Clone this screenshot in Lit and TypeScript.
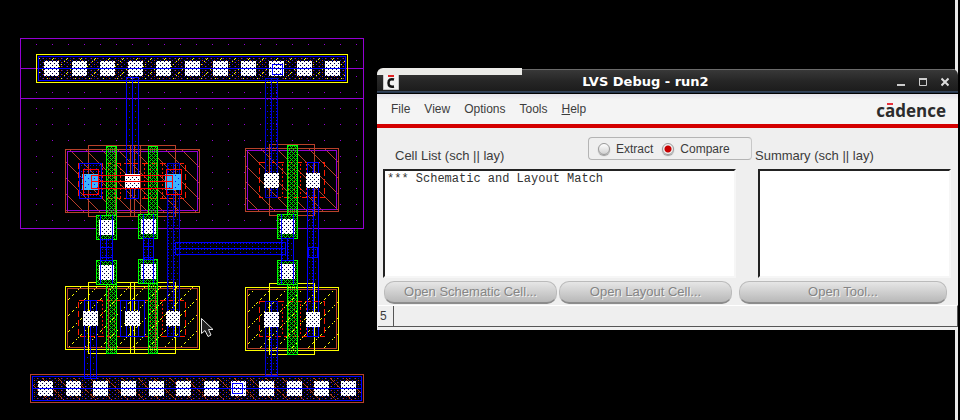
import { LitElement, html, svg, css } from "lit";
import { customElement } from "lit/decorators.js";

const BLUE = "#0000ff";
const DIM = "#0000d0";
const BROWN = "#b8402a";
const PURPLE = "#9400d3";
const YELLOW = "#ffff00";
const GREEN = "#00ff00";
const RED = "#ff1a00";

type Box = [x1: number, y1: number, x2: number, y2: number];

// One-pixel outline through the pixels of the given corners.
const outline = ([x1, y1, x2, y2]: Box, color: string, dash = "") => svg`
  <rect x=${x1 + 0.5} y=${y1 + 0.5} width=${x2 - x1} height=${y2 - y1}
    fill="none" stroke=${color} stroke-dasharray=${dash || "none"} />`;

const fill = ([x1, y1, x2, y2]: Box, paint: string) => svg`
  <rect x=${x1} y=${y1} width=${x2 - x1 + 1} height=${y2 - y1 + 1} fill=${paint} />`;

const hline = (x: number, y: number, w: number, color: string) => svg`
  <rect x=${x} y=${y} width=${w} height="1" fill=${color} />`;

const vline = (x: number, y: number, h: number, color: string) => svg`
  <rect x=${x} y=${y} width="1" height=${h} fill=${color} />`;

const contact = (x: number, y: number, w = 15, h = 15) => svg`
  <rect x=${x} y=${y} width=${w} height=${h} fill="#fff" />
  <rect x=${x} y=${y} width=${w} height=${h} fill="url(#pin)" />`;

const wire = (b: Box, color = BLUE) => svg`
  ${fill(b, "url(#metal)")}${outline(b, color)}
  ${vline(Math.round((b[0] + b[2]) / 2), b[1], b[3] - b[1], color)}`;

const poly = (b: Box) => svg`${fill(b, "url(#poly)")}${outline(b, GREEN)}`;

const gate = (b: Box, px: number, py: number) => svg`
  ${fill(b, "#000")}${fill(b, "url(#poly)")}${outline(b, GREEN)}${contact(px, py)}`;

const dots = (id: string, w: number, h: number, color: string, pts: number[][]) => svg`
  <pattern id=${id} width=${w} height=${h} patternUnits="userSpaceOnUse">
    ${pts.map(([x, y]) => svg`<rect x=${x} y=${y} width="1" height="1" fill=${color} />`)}
  </pattern>`;

const range = (n: number) => Array.from({ length: n }, (_, i) => i);

@customElement("layout-canvas")
export class LayoutCanvas extends LitElement {
  static styles = css`
    :host { display: block; }
    .drawing { display: block; width: 376px; height: 420px; }
  `;

  private defs() {
    return svg`<defs>
      ${dots("well", 16, 16, PURPLE, [[4, 12]])}
      ${dots("metal", 6, 6, BLUE, [[0, 0], [3, 3], [0, 3]])}
      ${dots("railBlue", 4, 4, BLUE, [[0, 0], [2, 2]])}
      ${dots("railRed", 6, 4, BROWN, [[1, 2], [4, 0]])}
      ${dots("poly", 4, 4, "#00e000", [[0, 0], [2, 0], [1, 1], [0, 2], [2, 2], [3, 3]])}
      ${dots("pin", 4, 4, "#000040", [[0, 1], [2, 3]])}
      ${dots("pinCyan", 6, 6, "#0000ff", [[1, 1], [4, 4]])}
      ${dots("active", 6, 4, RED, [[0, 0], [0, 1]])}
      ${dots("pdiag", 16, 16, BROWN, range(16).map((i) => [i, i]))}
      ${dots("ndiag", 16, 16, YELLOW, [0, 1, 4, 5, 8, 9, 12, 14].map((i) => [i, 15 - i]))}
      ${dots("railY", 14, 14, YELLOW, [[0, 13], [1, 12], [3, 10], [5, 8], [8, 5], [10, 3], [11, 2]])}
      ${dots("railB", 16, 16, BROWN, range(16).filter((i) => i % 5 !== 4).map((i) => [i, i]))}
    </defs>`;
  }

  private rails() {
    const top = [44, 72, 100, 128, 156, 185, 213, 241, 269, 297, 325];
    const bottom = [38, 66, 93, 121, 149, 176, 204, 231, 259, 287, 314, 341];
    return svg`
      ${fill([38, 56, 345, 80], "#000")}
      ${fill([38, 56, 345, 80], "url(#railRed)")}
      <g opacity="0.7">${fill([38, 56, 345, 80], "url(#railBlue)")}</g>
      ${fill([38, 56, 345, 80], "url(#railY)")}
      ${outline([36, 54, 347, 82], YELLOW)}
      ${outline([38, 56, 345, 80], BLUE)}
      ${top.map((x) => contact(x, 61))}
      ${hline(38, 68, 308, BLUE)}
      ${outline([272, 64, 282, 74], BLUE)}
      ${fill([32, 376, 361, 400], "url(#railRed)")}
      <g opacity="0.7">${fill([32, 376, 361, 400], "url(#railBlue)")}</g>
      ${fill([32, 376, 361, 400], "url(#railB)")}
      ${outline([30, 374, 363, 402], BROWN)}
      ${outline([32, 376, 361, 400], BLUE)}
      ${bottom.map((x) => contact(x, 381))}
      ${hline(32, 388, 330, BLUE)}
      ${outline([232, 383, 242, 393], BLUE)}`;
  }

  private pmos() {
    return svg`
      ${fill([65, 149, 199, 212], "#000")}
      ${fill([65, 149, 199, 212], "url(#pdiag)")}
      ${outline([67, 151, 197, 210], PURPLE)}
      ${outline([65, 149, 199, 212], BROWN)}
      ${outline([88, 145, 175, 216], BROWN)}
      ${[115, 130, 134, 140].map((x) => vline(x, 145, 71, BROWN))}
      ${fill([101, 164, 165, 197], "url(#active)")}
      ${outline([78, 163, 185, 198], RED, "6 3")}
      ${poly([106, 146, 116, 225])}
      ${poly([148, 146, 157, 225])}
      ${fill([79, 163, 101, 198], "url(#metal)")}
      ${outline([79, 163, 101, 198], BLUE)}
      ${fill([245, 148, 338, 211], "#000")}
      ${fill([245, 148, 338, 211], "url(#pdiag)")}
      ${outline([247, 150, 336, 209], PURPLE)}
      ${outline([245, 148, 338, 211], BROWN)}
      ${outline([269, 144, 314, 215], BROWN)}
      ${fill([279, 163, 306, 196], "url(#active)")}
      ${outline([259, 162, 324, 197], RED, "6 3")}
      ${poly([287, 145, 297, 225])}`;
  }

  private nmos() {
    return svg`
      ${fill([65, 286, 199, 349], "url(#ndiag)")}
      ${outline([67, 288, 197, 347], BROWN)}
      ${outline([65, 286, 199, 349], YELLOW)}
      ${outline([88, 282, 175, 353], YELLOW)}
      ${[130, 134].map((x) => vline(x, 282, 71, YELLOW))}
      ${fill([98, 301, 165, 335], "url(#active)")}
      ${outline([78, 300, 185, 336], RED, "6 3")}
      ${poly([106, 284, 116, 353])}
      ${poly([148, 283, 157, 353])}
      ${[108, 155].map((x) => vline(x, 288, 60, BROWN))}
      ${outline([120, 300, 144, 336], BLUE)}
      ${wire([126, 300, 138, 336])}
      ${fill([245, 287, 338, 350], "url(#ndiag)")}
      ${outline([247, 289, 336, 348], BROWN)}
      ${outline([245, 287, 338, 350], YELLOW)}
      ${outline([269, 283, 314, 354], YELLOW)}
      ${fill([279, 302, 306, 335], "url(#active)")}
      ${outline([259, 301, 324, 336], RED, "6 3")}
      ${poly([287, 284, 297, 354])}`;
  }

  private wiring() {
    return svg`
      ${wire([126, 77, 138, 198])}
      ${wire([265, 78, 277, 197], DIM)}
      ${wire([167, 163, 179, 336], DIM)}
      ${wire([84, 300, 96, 378])}
      ${wire([265, 301, 277, 375], DIM)}
      ${wire([307, 162, 318, 336])}
      ${outline([308, 247, 317, 257], BLUE)}
      ${fill([175, 242, 285, 254], "url(#metal)")}
      ${outline([175, 242, 285, 254], BLUE)}
      ${hline(175, 248, 110, BLUE)}
      ${gate([96, 215, 116, 239], 99, 220)}
      ${gate([138, 214, 157, 238], 141, 219)}
      ${gate([277, 214, 297, 238], 280, 219)}
      ${gate([96, 260, 116, 284], 99, 265)}
      ${gate([138, 259, 157, 283], 141, 264)}
      ${gate([277, 260, 297, 284], 280, 264)}
      ${wire([100, 239, 112, 260])}
      ${outline([100, 247, 112, 257], BLUE)}
      ${wire([143, 238, 153, 259])}
      ${outline([143, 246, 153, 257], BLUE)}
      ${wire([281, 238, 293, 260])}
      ${[100, 112].map((x) => svg`${vline(x, 215, 24, BLUE)}${vline(x, 260, 24, BLUE)}`)}
      ${[143, 153].map((x) => svg`${vline(x, 214, 24, BLUE)}${vline(x, 259, 24, BLUE)}`)}
      ${[281, 293].map((x) => svg`${vline(x, 214, 24, BLUE)}${vline(x, 260, 24, BLUE)}`)}
      ${fill([82, 174, 97, 189], "#3cb4ff")}
      ${fill([82, 174, 97, 189], "url(#pinCyan)")}
      ${fill([165, 174, 180, 189], "#3cb4ff")}
      ${fill([165, 174, 180, 189], "url(#pinCyan)")}
      ${contact(125, 174)}
      ${contact(264, 173)}${contact(306, 173, 14)}
      ${contact(83, 311)}${contact(125, 311)}${contact(166, 311, 14)}
      ${contact(264, 312)}${contact(306, 312, 14)}
      ${outline([83, 169, 98, 194], "#ff0000")}
      ${outline([166, 169, 181, 194], "#ff0000")}
      ${outline([91, 175, 172, 188], "#ff0000")}
      ${hline(91, 181, 82, "#ff0000")}`;
  }

  render() {
    return html`<svg class="drawing" viewBox="0 0 376 420" shape-rendering="crispEdges" role="img" aria-label="Cell layout">
      ${this.defs()}
      ${fill([20, 38, 363, 228], "url(#well)")}
      ${outline([20, 38, 363, 228], PURPLE)}
      ${hline(20, 68, 344, PURPLE)}
      ${hline(20, 98, 344, PURPLE)}
      ${this.rails()}
      ${this.pmos()}
      ${this.nmos()}
      ${this.wiring()}
      <path d="M201.5 318.5V333.5L205 330.5L208 336.5L211 335L208.500 329.500H213Z"
        fill="#222" stroke="#e8e8e8" shape-rendering="auto" />
    </svg>`;
  }
}

@customElement("debug-window")
export class DebugWindow extends LitElement {
  static styles = css`
    :host {
      display: block;
      position: relative;
      background: #efefef;
      color: #3c3c3c;
      font: 12px/16px "Liberation Sans", Arial, sans-serif;
      border-radius: 6px 6px 0 0;
    }
    * { box-sizing: border-box; }
    button { font: inherit; color: inherit; margin: 0; padding: 0; border: 0; background: none; }
    .title {
      display: flex;
      align-items: center;
      height: 25px;
      padding: 0 9px 0 6px;
      color: #fff;
      background: linear-gradient(#6a6a6a 0 1px, #383838 1px, #262626 12px, #1c1c1c 22px, #4a6a98 23px, #000 24px);
      border-radius: 6px 6px 0 0;
    }
    .badge { display: block; width: 16px; height: 16px; }
    .name {
      flex: 1;
      margin: 0;
      padding-right: 5px;
      text-align: center;
      font: bold 13px/16px "DejaVu Sans", sans-serif;
    }
    .controls { display: flex; gap: 14px; }
    .control { width: 8px; height: 10px; }
    .control svg { display: block; }
    .tab {
      position: absolute;
      left: 0;
      top: -1px;
      width: 25%;
      height: 7px;
      background: #ebebe8;
      border-radius: 6px 0 0 0;
    }
    .menubar {
      display: flex;
      align-items: center;
      height: 34px;
      padding: 0 12px 0 14px;
      background: linear-gradient(#e4e2ea, #f4f4f4 6px);
      border-bottom: 4px solid #d40000;
    }
    .menus { display: flex; gap: 14px; flex: 1; }
    .brand {
      font: 700 17px/20px "Open Sans", sans-serif;
      color: #2c2c2c;
      padding-top: 3px;
    }
    .bar { position: relative; }
    .bar::before {
      content: "";
      position: absolute;
      left: 2px;
      top: 4px;
      width: 6px;
      height: 2px;
      background: #e8303a;
    }
    .heads { display: flex; height: 41px; padding-top: 9px; }
    .headLeft, .headRight { padding-top: 11px; font-size: 13px; }
    .headLeft { flex: 1; padding-left: 18px; }
    .headRight { flex: none; width: 203px; }
    .modes {
      display: flex;
      align-items: center;
      width: 164px;
      height: 23px;
      margin: 0 3px 0 0;
      padding: 0 0 0 9px;
      border: 1px solid #b4b4b4;
      border-right-color: #c8c8c8;
      border-radius: 4px;
    }
    .mode { display: flex; align-items: center; gap: 6px; margin-right: 9px; }
    .radio {
      appearance: none;
      width: 12px;
      height: 12px;
      margin: 0;
      border-radius: 50%;
      border: 1px solid #999;
      background: linear-gradient(#fff, #d0d0d0);
      box-shadow: 0 1px 1px #999;
    }
    .radio:checked { background: radial-gradient(circle, #c80000 0 3px, #f0f0f0 4px); }
    .lists {
      display: grid;
      grid-template-columns: 353fr 193fr;
      gap: 22px;
      padding: 0 7px 0 6px;
    }
    .list {
      display: block;
      width: 100%;
      height: 109px;
      margin: 0;
      padding: 1px 2px;
      resize: none;
      outline: 0;
      overflow: hidden;
      border: 2px solid;
      border-color: #222 #f6f6f6 #f6f6f6 #222;
      background: #fff;
      color: #333;
      font: 12px/14px "Liberation Mono", "Courier New", monospace;
    }
    .actions {
      display: grid;
      grid-template-columns: 173fr 173fr 3px 208fr;
      gap: 2px;
      padding: 3px 11px 1px 7px;
    }
    .actions button {
      height: 23px;
      border: 1px solid #bbb;
      border-bottom: 2px solid #8c8c8c;
      border-radius: 10px;
      background: linear-gradient(#e6e6e6, #b8b8b8);
      color: #858585;
      text-shadow: 1px 1px 0 #f4f4f4;
      font-size: 13px;
      line-height: 16px;
    }
    .last { grid-column: 4; }
    .status {
      display: flex;
      height: 22px;
      margin: 0 0 3px 1px;
      border: 1px solid #555;
      border-top-color: #fff;
      border-left: 0;
    }
    .count { width: 16px; padding: 2px 0 0 2px; border-right: 1px solid #555; }
  `;

  render() {
    return html`
      <header class="title">
        <svg class="badge" viewBox="0 0 16 16" aria-hidden="true">
          <rect width="16" height="16" fill="#f2f2f2" stroke="#999" />
          <path d="M11 5.500Q5.500 4 5.500 9Q5.500 13.500 11 12.500" fill="none" stroke="#111" stroke-width="2.500" />
          <path d="M5 2H11" stroke="#e02020" stroke-width="2" />
        </svg>
        <h1 class="name">LVS Debug - run2</h1>
        <div class="controls">
          <button class="control" aria-label="Minimize">
            <svg width="8" height="10"><path d="M0 8H8" stroke="#ccc" stroke-width="2" /></svg>
          </button>
          <button class="control" aria-label="Maximize">
            <svg width="8" height="10"><path d="M.5 1V8.500H7.500V1" fill="none" stroke="#ccc" /><path d="M0 2H8" stroke="#ccc" stroke-width="2" /></svg>
          </button>
          <button class="control" aria-label="Close">
            <svg width="8" height="10"><path d="M.5 1.500L7.500 8.500M7.500 1.500L.5 8.500" stroke="#ddd" stroke-width="2" /></svg>
          </button>
        </div>
      </header>
      <div class="tab"></div>
      <div class="menubar">
        <nav class="menus">
          <button>File</button>
          <button>View</button>
          <button>Options</button>
          <button>Tools</button>
          <button><u>H</u>elp</button>
        </nav>
        <div class="brand">c<span class="bar">a</span>dence</div>
      </div>
      <div class="heads">
        <label class="headLeft" for="cells">Cell List (sch || lay)</label>
        <fieldset class="modes">
          <label class="mode"><input class="radio" type="radio" name="mode" />Extract</label>
          <label class="mode"><input class="radio" type="radio" name="mode" checked />Compare</label>
        </fieldset>
        <label class="headRight" for="summary">Summary (sch || lay)</label>
      </div>
      <div class="lists">
        <textarea id="cells" class="list" readonly .value=${"*** Schematic and Layout Match"}></textarea>
        <textarea id="summary" class="list" readonly></textarea>
      </div>
      <div class="actions">
        <button disabled>Open Schematic Cell...</button>
        <button disabled>Open Layout Cell...</button>
        <button class="last" disabled>Open Tool...</button>
      </div>
      <footer class="status"><span class="count">5</span></footer>
    `;
  }
}

@customElement("app-root")
export class AppRoot extends LitElement {
  static styles = css`
    :host {
      display: flex;
      align-items: flex-start;
      gap: 1px;
      min-height: 100vh;
      position: relative;
      background: #000;
    }
    :host::before {
      content: "";
      position: absolute;
      right: 2px;
      top: 0;
      bottom: 0;
      width: 3px;
      background: #e8e8e8;
    }
    .window { flex: 1; margin: 69px 2px 0 0; }
  `;

  render() {
    return html`
      <layout-canvas></layout-canvas>
      <debug-window class="window"></debug-window>
    `;
  }
}
